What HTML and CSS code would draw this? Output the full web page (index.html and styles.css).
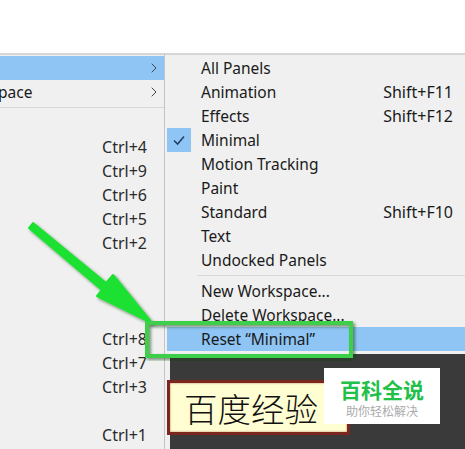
FILE: index.html
```html
<!DOCTYPE html>
<html>
<head>
<meta charset="UTF-8">
<title>Workspace menu</title>
<link rel="stylesheet" href="styles.css">
</head>
<body>
<div class="screen">
	<div class="menu menu_left">
		<div class="row current"><span class="label"></span><svg class="arrow" width="6" height="10" viewBox="0 0 6 10"><path d="M0.7 0.7L5 5 0.7 9.3" fill="none" stroke="#444444" stroke-width="1"/></svg></div>
		<div class="row"><span class="label pace">pace</span><svg class="arrow" width="6" height="10" viewBox="0 0 6 10"><path d="M0.7 0.7L5 5 0.7 9.3" fill="none" stroke="#444444" stroke-width="1"/></svg></div>
		<div class="sep"></div>
		<div class="row row_gap"></div>
		<div class="row"><span class="label"></span><span class="key">Ctrl+4</span></div>
		<div class="row"><span class="label"></span><span class="key">Ctrl+9</span></div>
		<div class="row"><span class="label"></span><span class="key">Ctrl+6</span></div>
		<div class="row"><span class="label"></span><span class="key">Ctrl+5</span></div>
		<div class="row"><span class="label"></span><span class="key">Ctrl+2</span></div>
		<div class="row"></div>
		<div class="row"></div>
		<div class="row"></div>
		<div class="row"><span class="label"></span><span class="key">Ctrl+8</span></div>
		<div class="row"><span class="label"></span><span class="key">Ctrl+7</span></div>
		<div class="row"><span class="label"></span><span class="key">Ctrl+3</span></div>
		<div class="row"></div>
		<div class="row"><span class="label"></span><span class="key">Ctrl+1</span></div>
	</div>
	<div class="side">
		<div class="menu menu_right">
			<div class="item"><span class="tick"></span><span class="label">All Panels</span></div>
			<div class="item"><span class="tick"></span><span class="label">Animation</span><span class="key">Shift+F11</span></div>
			<div class="item"><span class="tick"></span><span class="label">Effects</span><span class="key">Shift+F12</span></div>
			<div class="item"><span class="tick on"><svg width="24" height="24" viewBox="0 0 24 24"><path d="M7 12.5l3.6 3.6L17 8.6" fill="none" stroke="#1f3f66" stroke-width="1.5"/></svg></span><span class="label">Minimal</span></div>
			<div class="item"><span class="tick"></span><span class="label">Motion Tracking</span></div>
			<div class="item"><span class="tick"></span><span class="label">Paint</span></div>
			<div class="item"><span class="tick"></span><span class="label">Standard</span><span class="key">Shift+F10</span></div>
			<div class="item"><span class="tick"></span><span class="label">Text</span></div>
			<div class="item"><span class="tick"></span><span class="label">Undocked Panels</span></div>
			<div class="sep sep_right"></div>
			<div class="item"><span class="tick"></span><span class="label">New Workspace...</span></div>
			<div class="item"><span class="tick"></span><span class="label">Delete Workspace...</span></div>
			<div class="item current"><span class="tick"></span><span class="label">Reset “Minimal”</span></div>
		</div>
		<div class="dark"></div>
	</div>

	<svg class="marks" width="465" height="449" viewBox="0 0 465 449">
		<defs>
			<filter id="soft" x="-10%" y="-10%" width="125%" height="125%">
				<feDropShadow dx="2" dy="2" stdDeviation="1.5" flood-color="#0a3d10" flood-opacity="0.55"/>
			</filter>
		</defs>
		<path d="M33 223L106 283 113 275 152 323 97 296 102 290 29 228z" fill="#1fe032" stroke="#1fe032" stroke-width="2" stroke-linejoin="round" filter="url(#soft)"/>
		<rect x="147" y="323" width="204" height="33" fill="none" stroke="#3ecf4a" stroke-width="4" filter="url(#soft)"/>
	</svg>

	<div class="stamp">百度经验</div>
	<div class="brand">
		<div class="brand_name">百科全说</div>
		<div class="brand_sub">助你轻松解决</div>
	</div>
</div>
</body>
</html>
```

FILE: styles.css
```css
html, body{
	margin: 0;
	padding: 0;
	background: #ffffff;
}

.screen{
	position: relative;
	width: 465px;
	height: 449px;
	overflow: hidden;
	display: flex;
	padding-top: 53px;
	box-sizing: border-box;
	font-family: "Noto Sans", "Noto Sans CJK SC", sans-serif;
	font-size: 15.5px;
	color: #1a1a1a;
}

.menu{
	background: #f0f0f0;
	border-top: 2px solid #d6d6d6;
	box-sizing: border-box;
}

.menu_left{
	width: 165px;
	padding-top: 1px;
	border-right: 1px solid #c4c4c4;
}

.side{
	flex: 1;
	display: flex;
	flex-direction: column;
	background: #f0f0f0;
}

.menu_right{
	height: 301px;
	padding: 1px 0 0 2px;
}

.row, .item{
	display: flex;
	align-items: center;
	height: 24px;
}

.row_gap{
	height: 27px;
}

.row .label{
	flex: 1;
}

.pace{
	margin-left: -2px;
}

.row .key{
	margin-right: 17px;
	font-size: 16px;
	color: #2a2a2a;
}

.arrow{
	flex: none;
	margin-right: 7px;
}

.current{
	background: #8ec5f5;
}

.sep{
	height: 1px;
	margin: 3px 0 0;
	background: #d8d8d8;
}

.sep_right{
	margin: 3px 0 3px 30px;
}

.tick{
	flex: none;
	width: 24px;
	height: 24px;
	margin-right: 10px;
}

.tick.on{
	background: #8ec5f5;
}

.item .label{
	flex: 1;
}

.item .key{
	margin-right: 12px;
	font-size: 16px;
}

.dark{
	flex: 1;
	margin: 0 0 0 5px;
	background: #3a3a3a;
}

.marks{
	position: absolute;
	left: 0;
	top: 0;
}

.stamp{
	position: absolute;
	left: 167px;
	top: 380px;
	width: 183px;
	height: 55px;
	box-sizing: border-box;
	border: 3px solid #7c2620;
	padding-left: 14px;
	background: #fffdd2;
	box-shadow: 0 0 2px #b06a50 inset;
	font-family: "Noto Sans CJK SC", serif;
	font-size: 33.5px;
	font-weight: 300;
	line-height: 50px;
	color: #111111;
}

.brand{
	position: absolute;
	left: 324px;
	top: 368px;
	width: 116px;
	height: 56px;
	background: #ffffff;
	text-align: center;
	font-family: "Noto Sans CJK SC", sans-serif;
}

.brand_name{
	margin-top: 9px;
	font-size: 21px;
	line-height: 25px;
	font-weight: 700;
	color: #22c04a;
}

.brand_sub{
	font-size: 12px;
	line-height: 17px;
	color: #aaaaaa;
}
```
